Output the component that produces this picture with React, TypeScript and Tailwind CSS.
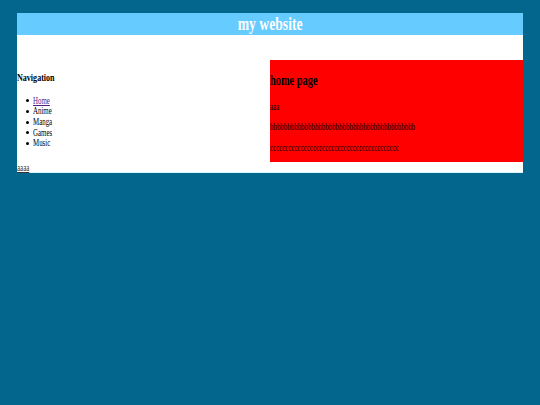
const serif = { fontFamily: '"Liberation Serif", "Times New Roman", serif' };

// narrow text run, squeezed horizontally from its left edge
function Squeeze({ children, className = '' }: { children: React.ReactNode; className?: string }) {
  return <span className={`inline-block origin-left scale-x-[0.72] whitespace-nowrap ${className}`}>{children}</span>;
}

const navItems = ['Home', 'Anime', 'Manga', 'Games', 'Music'];

function App() {
  return (
    <div className="min-h-screen bg-[#03668c] pt-[13px] px-[17px]" style={serif}>
      <div className="w-[506px] bg-white text-black text-[9.6px] leading-[11px] border-b border-[#d8f4ff]">
        <header className="h-[22px] bg-[#66ccff] flex items-center justify-center">
          <span className="inline-block origin-center scale-x-[0.72] whitespace-nowrap text-[19px] leading-[22px] font-bold text-white">
            my website
          </span>
        </header>

        <div className="h-[25px]" />

        <div className="flex">
          {/* sidebar */}
          <div className="w-1/2 pt-[11px]">
            <h3 className="text-[11.2px] leading-[13px] font-bold">
              <Squeeze>Navigation</Squeeze>
            </h3>
            <ul className="mt-[11.5px] pl-[9px] text-[9.6px] leading-[10.7px]">
              {navItems.map((item, i) => (
                <li key={item} className="flex items-center gap-[4px] h-[10.7px]">
                  <span className="w-[3px] h-[3px] rounded-full bg-black shrink-0" />
                  {i === 0 ? (
                    <Squeeze className="text-[#551a8b] underline">{item}</Squeeze>
                  ) : (
                    <Squeeze>{item}</Squeeze>
                  )}
                </li>
              ))}
            </ul>
          </div>

          {/* main content */}
          <div className="w-1/2 bg-[#ff0000] pt-[12px] pb-[9px]">
            <h2 className="text-[14.4px] leading-[16.5px] font-bold">
              <Squeeze>home page</Squeeze>
            </h2>
            <p className="mt-[12px]">
              <Squeeze>aaa</Squeeze>
            </p>
            <p className="mt-[9.6px]">
              <Squeeze>{'b'.repeat(42)}</Squeeze>
            </p>
            <p className="mt-[9.6px]">
              <Squeeze>{'c'.repeat(42)}</Squeeze>
            </p>
          </div>
        </div>

        <footer className="h-[10px]">
          <Squeeze className="underline text-[#333]">aaaa</Squeeze>
        </footer>
      </div>
    </div>
  );
}

export default App;
